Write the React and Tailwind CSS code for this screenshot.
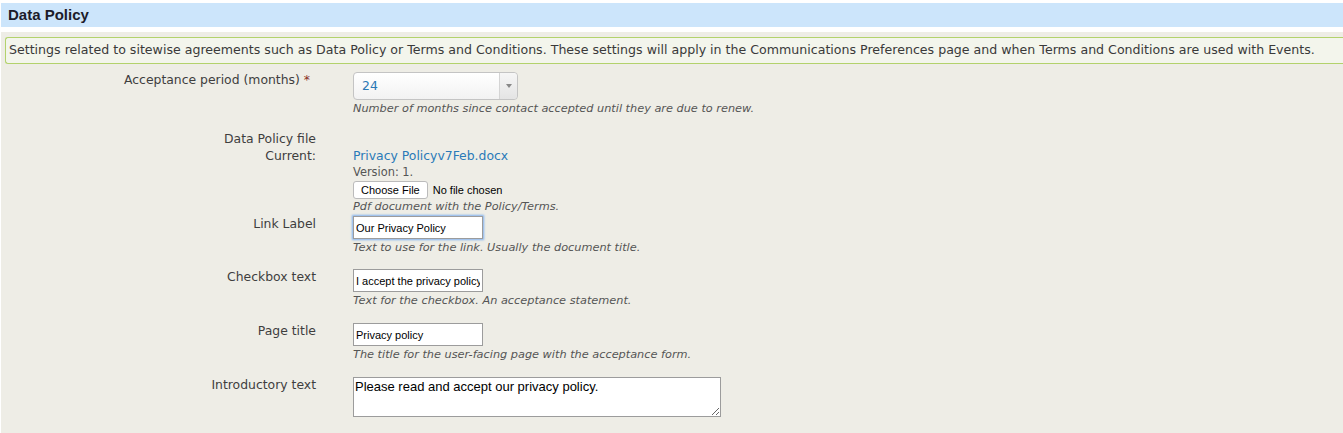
import React, { useState } from 'react';

const label = "text-right text-[12.4px] text-[#3e3e3e] leading-[16px]";
const desc = "italic text-[11.3px] text-[#555] leading-[15px]";
const input = "block w-[130px] h-[23px] border border-[#9c9c9c] bg-white px-[2px] text-[11px] text-black font-['Liberation_Sans',Arial,sans-serif] outline-none";

const Row = ({ name, children, className = "" }) => (
  <div className={`flex ${className}`}>
    <div className="w-[311px] shrink-0">
      <div className={label}>{name}</div>
    </div>
    <div className="ml-[37px]">{children}</div>
  </div>
);

const App = () => {
  const [period, setPeriod] = useState('24');
  const [linkLabel, setLinkLabel] = useState('Our Privacy Policy');
  const [checkText, setCheckText] = useState('I accept the privacy policy');
  const [title, setTitle] = useState('Privacy policy');
  const [intro, setIntro] = useState('Please read and accept our privacy policy.');

  return (
    <div className="w-[1343px] h-[433px] bg-white overflow-hidden font-['DejaVu_Sans',Verdana,sans-serif]">
      {/* Header */}
      <div className="mt-[3px] ml-[1px] h-[24px] bg-[#cce5fb] flex items-center px-[7px]">
        <h2 className="text-[15px] font-bold text-[#1c1c2a] font-['Liberation_Sans',Arial,sans-serif]">Data Policy</h2>
      </div>

      {/* Body */}
      <div className="mt-[5px] ml-[1px] h-[401px] bg-[#eeede6] pt-[5px] pl-[4px]">
        <div className="h-[27px] border border-[#b3d26c] rounded-l-[3px] border-r-0 bg-[#f3f5ec] flex items-center px-[3px] text-[12.6px] text-[#3a3a3a] whitespace-nowrap">
          Settings related to sitewise agreements such as Data Policy or Terms and Conditions. These settings will apply in the Communications Preferences page and when Terms and Conditions are used with Events.
        </div>

        <div className="pt-[8px]">
          <Row name={<span className="mr-[6px]">Acceptance period (months) <span className="text-[#8a2f1f]">*</span></span>}>
            <div className="relative w-[165px] h-[28px] rounded-[4px] border border-[#c4c4c4] bg-gradient-to-b from-white to-[#f2f2f2] flex items-center">
              <select
                value={period}
                onChange={(e) => setPeriod(e.target.value)}
                className="appearance-none w-full h-full bg-transparent pl-[8px] text-[12.4px] text-[#2a78b5] outline-none"
              >
                <option value="6">6</option>
                <option value="12">12</option>
                <option value="24">24</option>
                <option value="36">36</option>
              </select>
              <div className="absolute right-0 top-0 h-full w-[18px] border-l border-[#d4d4d4] bg-gradient-to-b from-[#f6f6f6] to-[#e4e4e4] rounded-r-[4px] flex items-center justify-center pointer-events-none">
                <svg width="6" height="4" viewBox="0 0 6 4"><path d="M0 0h6L3 4z" fill="#888" /></svg>
              </div>
            </div>
            <div className={`${desc} mt-[1px]`}>Number of months since contact accepted until they are due to renew.</div>
          </Row>

          <div className="flex mt-[14px]">
            <div className="w-[311px] shrink-0">
              <div className={`${label} leading-[17px]`}>Data Policy file</div>
              <div className={`${label} leading-[17px]`}>Current:</div>
            </div>
            <div className="ml-[37px] pt-[17px]">
              <a href="#" className="block text-[12.4px] leading-[17px] text-[#2a7ab8]">Privacy Policyv7Feb.docx</a>
              <div className="text-[11.4px] leading-[17px] text-[#555]">Version: 1.</div>
              <div className="flex items-center font-['Liberation_Sans',Arial,sans-serif] text-[11px] text-black">
                <button className="h-[18px] px-[7px] bg-white border border-[#bbb] rounded-[3px] text-[11px] leading-none">Choose File</button>
                <span className="ml-[5px]">No file chosen</span>
              </div>
              <div className={desc}>Pdf document with the Policy/Terms.</div>
            </div>
          </div>

          <Row name="Link Label" className="mt-[2px]">
            <input
              value={linkLabel}
              onChange={(e) => setLinkLabel(e.target.value)}
              className={`${input} border-[#6b9fe0] shadow-[0_0_2px_1px_#7fb0f0]`}
            />
            <div className={`${desc} mt-[1px]`}>Text to use for the link. Usually the document title.</div>
          </Row>

          <Row name="Checkbox text" className="mt-[14px]">
            <input value={checkText} onChange={(e) => setCheckText(e.target.value)} className={input} />
            <div className={`${desc} mt-[1px]`}>Text for the checkbox. An acceptance statement.</div>
          </Row>

          <Row name="Page title" className="mt-[15px]">
            <input value={title} onChange={(e) => setTitle(e.target.value)} className={input} />
            <div className={`${desc} mt-[1px]`}>The title for the user-facing page with the acceptance form.</div>
          </Row>

          <Row name="Introductory text" className="mt-[15px]">
            <textarea
              value={intro}
              onChange={(e) => setIntro(e.target.value)}
              className="block w-[368px] h-[40px] border border-[#9c9c9c] bg-white px-[1px] pt-[1px] text-[13px] leading-[15px] text-black font-['Liberation_Sans',Arial,sans-serif] outline-none"
            />
          </Row>
        </div>
      </div>
    </div>
  );
};

export default App;
